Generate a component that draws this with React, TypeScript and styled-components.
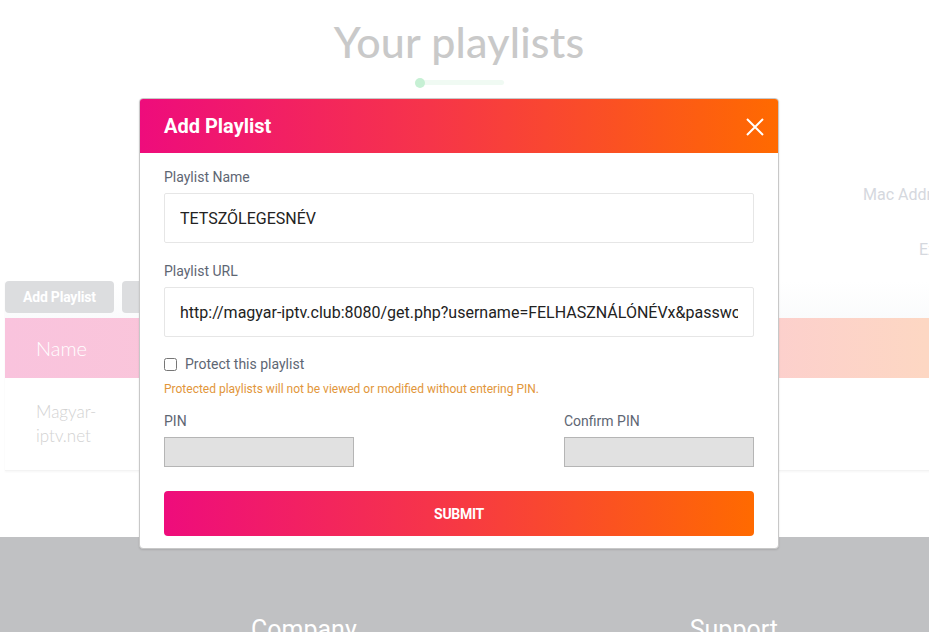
import styled, { createGlobalStyle } from 'styled-components';

const GlobalStyle = createGlobalStyle`
  html, body {
    margin: 0;
    padding: 0;
    background: #ffffff;
    overflow: hidden;
  }
  * {
    box-sizing: border-box;
  }
`;

const Page = styled.div`
  position: relative;
  width: 929px;
  height: 632px;
  overflow: hidden;
  font-family: Lato, "Open Sans", sans-serif;
`;

const Content = styled.main`
  width: 1200px;
  padding-top: 18px;
`;

const HeadingBlock = styled.section`
  width: 918px;
  display: flex;
  flex-direction: column;
  align-items: center;
`;

const PageTitle = styled.h1`
  margin: 0;
  font-size: 43px;
  line-height: 48px;
  font-weight: 500;
  color: #c9c9c9;
  letter-spacing: 0.2px;
`;

const TitleBar = styled.div`
  margin-top: 14px;
  width: 89px;
  height: 5px;
  border-radius: 3px;
  background: #f0faf3;
  display: flex;
  align-items: center;
`;

const TitleDot = styled.span`
  width: 10px;
  height: 10px;
  border-radius: 50%;
  background: #c6f0d4;
`;

const InfoBlock = styled.div`
  margin-top: 100px;
  display: flex;
  flex-direction: column;
  gap: 35px;
`;

const InfoLine = styled.div<{ $indent: number }>`
  padding-left: ${({ $indent }) => $indent}px;
  font-family: Roboto, "Liberation Sans", sans-serif;
  font-size: 16px;
  line-height: 20px;
  color: #d5d8de;
  white-space: nowrap;
`;

const TableCard = styled.section`
  margin-top: 21px;
  margin-left: 5px;
  width: 1150px;
  box-shadow: 0 1px 2px rgba(0, 0, 0, 0.04);
`;

const Toolbar = styled.div`
  height: 37px;
  display: flex;
  gap: 8px;
  align-items: flex-start;
  background: linear-gradient(to bottom, #ffffff 0%, #fafbfc 100%);
`;

const ToolButton = styled.button`
  height: 32px;
  padding: 0 18px;
  border: none;
  border-radius: 4px;
  background: #dcdddf;
  color: #ffffff;
  font-family: Roboto, "Liberation Sans", sans-serif;
  font-weight: 700;
  font-size: 14px;
  letter-spacing: -0.2px;
`;

const HeaderRow = styled.div`
  height: 60px;
  display: flex;
  align-items: center;
  padding-left: 31px;
  background: linear-gradient(to right, #f9c3dd 0%, #fccdd0 62%, #fdd7c3 80%, #fdd9be 100%);
`;

const HeaderCell = styled.div`
  font-size: 20px;
  font-weight: 300;
  color: #ffffff;
`;

const BodyRow = styled.div`
  height: 93px;
  display: flex;
  align-items: center;
  padding-left: 31px;
  border-bottom: 1px solid #f3f3f3;
`;

const NameCell = styled.div`
  width: 80px;
  font-size: 17px;
  line-height: 24px;
  font-weight: 300;
  color: #d2d2d2;
`;

const Footer = styled.footer`
  margin-top: 66px;
  height: 120px;
  background: #c0c1c3;
  display: flex;
  padding-top: 78px;
`;

const FooterHeading = styled.h3<{ $offset: number }>`
  margin: 0 0 0 ${({ $offset }) => $offset}px;
  font-family: Roboto, "Liberation Sans", sans-serif;
  font-size: 25px;
  font-weight: 400;
  color: #ffffff;
`;

const Modal = styled.div`
  position: absolute;
  top: 98px;
  left: 139px;
  width: 640px;
  background: #ffffff;
  border: 1px solid #c8c8c8;
  border-radius: 4px;
  overflow: hidden;
  box-shadow: 0 1px 2px rgba(0, 0, 0, 0.12);
  font-family: Roboto, "Liberation Sans", sans-serif;
`;

const ModalHeader = styled.div`
  height: 54px;
  display: flex;
  align-items: center;
  justify-content: space-between;
  padding: 0 8px 0 24px;
  background: linear-gradient(to right, #ee0c7c 0%, #f6344a 45%, #ff6a00 100%);
`;

const ModalTitle = styled.h2`
  margin: 0;
  font-size: 20px;
  font-weight: 700;
  color: #ffffff;
`;

const CloseButton = styled.button`
  width: 30px;
  height: 30px;
  margin-top: 2px;
  padding: 0;
  border: none;
  background: transparent;
  display: flex;
  align-items: center;
  justify-content: center;
`;

const ModalBody = styled.form`
  padding: 15px 24px 12px;
  display: flex;
  flex-direction: column;
`;

const Field = styled.div<{ $gap?: number }>`
  display: flex;
  flex-direction: column;
  margin-bottom: ${({ $gap }) => $gap ?? 0}px;
`;

const Label = styled.label`
  font-size: 14px;
  line-height: 18px;
  color: #5e6673;
  margin-bottom: 7px;
`;

const TextInput = styled.input`
  height: 50px;
  padding: 0 15px;
  border: 1px solid #e6e6e6;
  border-radius: 2px;
  font-family: Roboto, "Liberation Sans", sans-serif;
  font-size: 16px;
  color: #222;
  outline: none;
`;

const CheckRow = styled.div`
  display: flex;
  align-items: center;
  gap: 8px;
  height: 18px;
  margin-bottom: 9px;
`;

const CheckBox = styled.input`
  width: 13px;
  height: 13px;
  margin: 0;
`;

const CheckLabel = styled.label`
  font-size: 14px;
  color: #5e6673;
`;

const Hint = styled.p`
  margin: 0 0 15px;
  font-size: 12px;
  line-height: 15px;
  color: #e2963a;
`;

const PinRow = styled.div`
  display: flex;
  justify-content: space-between;
  margin-bottom: 24px;
`;

const PinField = styled.div`
  width: 190px;
  display: flex;
  flex-direction: column;
`;

const PinInput = styled.input`
  height: 30px;
  border: 1px solid #b5b5b5;
  background: #e1e1e1;
  outline: none;
`;

const SubmitButton = styled.button`
  height: 45px;
  border: none;
  border-radius: 4px;
  background: linear-gradient(to right, #ee0c7c 0%, #f6344a 45%, #ff6a00 100%);
  color: #ffffff;
  font-family: Roboto, "Liberation Sans", sans-serif;
  font-weight: 700;
  font-size: 14px;
  text-transform: uppercase;
  letter-spacing: -0.3px;
`;

const App = () => {
  return (
    <Page>
      <GlobalStyle />
      <Content>
        <HeadingBlock>
          <PageTitle>Your playlists</PageTitle>
          <TitleBar>
            <TitleDot />
          </TitleBar>
        </HeadingBlock>

        <InfoBlock>
          <InfoLine $indent={863}>Mac Address:</InfoLine>
          <InfoLine $indent={919}>Expiration:</InfoLine>
        </InfoBlock>

        <TableCard>
          <Toolbar>
            <ToolButton>Add Playlist</ToolButton>
            <ToolButton>Add Playlist</ToolButton>
          </Toolbar>
          <HeaderRow>
            <HeaderCell>Name</HeaderCell>
          </HeaderRow>
          <BodyRow>
            <NameCell>Magyar-iptv.net</NameCell>
          </BodyRow>
        </TableCard>

        <Footer>
          <FooterHeading $offset={251}>Company</FooterHeading>
          <FooterHeading $offset={333}>Support</FooterHeading>
        </Footer>
      </Content>

      <Modal>
        <ModalHeader>
          <ModalTitle>Add Playlist</ModalTitle>
          <CloseButton type="button" aria-label="Close">
            <svg width="18" height="18" viewBox="0 0 18 18" fill="none">
              <path d="M1 1L17 17M17 1L1 17" stroke="#ffffff" strokeWidth="2" />
            </svg>
          </CloseButton>
        </ModalHeader>
        <ModalBody>
          <Field $gap={19}>
            <Label>Playlist Name</Label>
            <TextInput defaultValue="TETSZŐLEGESNÉV" />
          </Field>
          <Field $gap={18}>
            <Label>Playlist URL</Label>
            <TextInput defaultValue="http://magyar-iptv.club:8080/get.php?username=FELHASZNÁLÓNÉVx&password=JELSZÓ&type=m3u_plus&output=ts" />
          </Field>
          <CheckRow>
            <CheckBox type="checkbox" id="protect" />
            <CheckLabel htmlFor="protect">Protect this playlist</CheckLabel>
          </CheckRow>
          <Hint>Protected playlists will not be viewed or modified without entering PIN.</Hint>
          <PinRow>
            <PinField>
              <Label>PIN</Label>
              <PinInput type="password" />
            </PinField>
            <PinField>
              <Label>Confirm PIN</Label>
              <PinInput type="password" />
            </PinField>
          </PinRow>
          <SubmitButton type="button">Submit</SubmitButton>
        </ModalBody>
      </Modal>
    </Page>
  );
};

export default App;
